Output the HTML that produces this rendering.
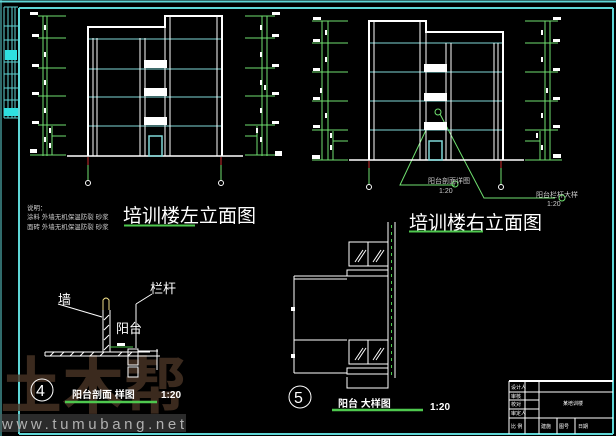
<!DOCTYPE html>
<html><head><meta charset="utf-8"><style>
html,body{margin:0;padding:0;background:#000;}
svg{display:block}
text{font-family:"Liberation Sans","Noto Sans CJK SC",sans-serif;}
</style></head><body>
<svg width="616" height="436" viewBox="0 0 616 436" xmlns="http://www.w3.org/2000/svg">
<rect width="616" height="436" fill="#000"/>
<g stroke="#5fd6d6" fill="none">
<line x1="0" y1="1.5" x2="616" y2="1.5" stroke-width="2"/>
<line x1="19" y1="8" x2="613" y2="8" stroke-width="2"/>
<line x1="19" y1="8" x2="19" y2="434" stroke-width="2"/>
<line x1="613" y1="8" x2="613" y2="434" stroke-width="2"/>
<line x1="19" y1="434" x2="613" y2="434" stroke-width="2"/>
<line x1="1" y1="0" x2="1" y2="436" stroke-width="1"/>
<g stroke-width="1">
<line x1="4" y1="7" x2="4" y2="118"/><line x1="8" y1="7" x2="8" y2="118"/><line x1="12" y1="7" x2="12" y2="118"/><line x1="15" y1="7" x2="15" y2="118"/>
<line x1="4" y1="7" x2="18" y2="7"/><line x1="4" y1="26" x2="18" y2="26"/><line x1="4" y1="40" x2="18" y2="40"/><line x1="4" y1="62" x2="18" y2="62"/><line x1="4" y1="74" x2="18" y2="74"/><line x1="4" y1="88" x2="18" y2="88"/><line x1="4" y1="100" x2="18" y2="100"/><line x1="4" y1="118" x2="18" y2="118"/>
</g>
</g>
<rect x="5" y="50" width="12" height="10" fill="#2ee0e0"/>
<rect x="4" y="108" width="14" height="8" fill="#2ee0e0"/>

<g stroke="#6fe06f" stroke-width="1" fill="none">
<line x1="43" y1="16" x2="43" y2="156"/><line x1="47" y1="16" x2="47" y2="156"/>
<line x1="38" y1="16" x2="66" y2="16"/><line x1="38" y1="38" x2="66" y2="38"/><line x1="38" y1="68" x2="66" y2="68"/><line x1="38" y1="96" x2="66" y2="96"/><line x1="38" y1="125" x2="66" y2="125"/><line x1="30" y1="155" x2="66" y2="155"/>
<line x1="52" y1="126" x2="52" y2="155"/><line x1="52" y1="136" x2="66" y2="136"/>
<line x1="262" y1="16" x2="262" y2="156"/><line x1="267" y1="16" x2="267" y2="156"/>
<line x1="245" y1="16" x2="275" y2="16"/><line x1="245" y1="38" x2="275" y2="38"/><line x1="245" y1="68" x2="275" y2="68"/><line x1="245" y1="96" x2="275" y2="96"/><line x1="245" y1="125" x2="275" y2="125"/><line x1="245" y1="155" x2="282" y2="155"/>
<line x1="257" y1="126" x2="257" y2="155"/><line x1="245" y1="136" x2="257" y2="136"/>
<line x1="88" y1="165" x2="88" y2="181"/><line x1="221" y1="165" x2="221" y2="181"/>
</g>
<g fill="#fff">
<rect x="30" y="12" width="8" height="3"/><rect x="32" y="34" width="7" height="3"/><rect x="32" y="64" width="7" height="3"/><rect x="32" y="92" width="7" height="3"/><rect x="32" y="121" width="7" height="3"/><rect x="30" y="149" width="7" height="4"/>
<rect x="44" y="25" width="2" height="5"/><rect x="44" y="52" width="2" height="5"/><rect x="44" y="80" width="2" height="5"/><rect x="44" y="108" width="2" height="5"/><rect x="44" y="137" width="2" height="5"/><rect x="49" y="128" width="2" height="5"/><rect x="49" y="143" width="2" height="5"/>
<rect x="272" y="12" width="8" height="3"/><rect x="272" y="34" width="7" height="3"/><rect x="272" y="64" width="7" height="3"/><rect x="272" y="92" width="7" height="3"/><rect x="272" y="121" width="7" height="3"/><rect x="275" y="151" width="7" height="5"/>
<rect x="260" y="25" width="2" height="5"/><rect x="260" y="52" width="2" height="5"/><rect x="260" y="80" width="2" height="5"/><rect x="264" y="85" width="2" height="5"/><rect x="260" y="108" width="2" height="5"/><rect x="260" y="137" width="2" height="5"/><rect x="256" y="128" width="2" height="5"/>
</g>
<g stroke="#7fd8d8" stroke-width="1">
<line x1="88" y1="39" x2="222" y2="39"/><line x1="88" y1="69" x2="222" y2="69"/><line x1="88" y1="97" x2="222" y2="97"/><line x1="88" y1="126" x2="222" y2="126"/>
</g>
<g stroke="#fff" fill="none">
<path d="M88 156 V27 H165 V16 H222 V156" stroke-width="2"/>
<line x1="67" y1="156" x2="243" y2="156" stroke-width="1.5"/>
<line x1="93" y1="38" x2="93" y2="156"/><line x1="97" y1="38" x2="97" y2="156"/><line x1="140" y1="38" x2="140" y2="156"/><line x1="145" y1="38" x2="145" y2="156"/><line x1="165" y1="27" x2="165" y2="156"/><line x1="170" y1="16" x2="170" y2="156"/><line x1="217" y1="16" x2="217" y2="156"/>
</g>
<g fill="#fff"><rect x="144" y="60" width="23" height="8"/><rect x="144" y="88" width="23" height="8"/><rect x="144" y="117" width="23" height="8"/></g>
<rect x="149" y="136" width="13" height="20" fill="none" stroke="#7fd8d8" stroke-width="1.5"/>
<g stroke="#d03030"><line x1="88" y1="157" x2="88" y2="165"/><line x1="221" y1="157" x2="221" y2="165"/></g>
<g stroke="#fff" fill="none"><circle cx="88" cy="183" r="2.5"/><circle cx="221" cy="183" r="2.5"/></g>

<g stroke="#6fe06f" stroke-width="1" fill="none">
<line x1="322" y1="21" x2="322" y2="160"/><line x1="328" y1="21" x2="328" y2="160"/>
<line x1="312" y1="21" x2="348" y2="21"/><line x1="312" y1="43" x2="348" y2="43"/><line x1="312" y1="72" x2="348" y2="72"/><line x1="312" y1="101" x2="348" y2="101"/><line x1="312" y1="130" x2="348" y2="130"/><line x1="312" y1="160" x2="348" y2="160"/>
<line x1="333" y1="131" x2="333" y2="160"/><line x1="333" y1="141" x2="348" y2="141"/>
<line x1="545" y1="21" x2="545" y2="160"/><line x1="550" y1="21" x2="550" y2="160"/>
<line x1="525" y1="21" x2="558" y2="21"/><line x1="525" y1="43" x2="558" y2="43"/><line x1="525" y1="72" x2="558" y2="72"/><line x1="525" y1="101" x2="558" y2="101"/><line x1="525" y1="130" x2="558" y2="130"/><line x1="525" y1="160" x2="562" y2="160"/>
<line x1="540" y1="131" x2="540" y2="160"/><line x1="525" y1="141" x2="540" y2="141"/>
<line x1="369" y1="168" x2="369" y2="185"/><line x1="501" y1="168" x2="501" y2="185"/>
<path d="M426 130 L400 185 H455"/><path d="M440 114 L484 198 H555"/>
<circle cx="438" cy="112" r="3"/><circle cx="455" cy="184" r="3"/><circle cx="562" cy="198" r="3"/>
</g>
<g fill="#fff">
<rect x="313" y="17" width="8" height="3"/><rect x="313" y="39" width="7" height="3"/><rect x="313" y="68" width="7" height="3"/><rect x="313" y="97" width="7" height="3"/><rect x="313" y="125" width="7" height="3"/><rect x="312" y="155" width="8" height="4"/>
<rect x="325" y="30" width="2" height="5"/><rect x="325" y="57" width="2" height="5"/><rect x="320" y="88" width="2" height="5"/><rect x="325" y="113" width="2" height="5"/><rect x="330" y="133" width="2" height="5"/><rect x="330" y="145" width="2" height="5"/>
<rect x="553" y="17" width="8" height="3"/><rect x="553" y="39" width="7" height="3"/><rect x="553" y="68" width="7" height="3"/><rect x="553" y="97" width="7" height="3"/><rect x="553" y="125" width="7" height="3"/><rect x="553" y="154" width="8" height="4"/>
<rect x="541" y="30" width="2" height="5"/><rect x="541" y="57" width="2" height="5"/><rect x="546" y="88" width="2" height="5"/><rect x="541" y="113" width="2" height="5"/><rect x="536" y="133" width="2" height="5"/><rect x="541" y="145" width="2" height="5"/>
</g>
<g stroke="#7fd8d8" stroke-width="1">
<line x1="369" y1="43" x2="503" y2="43"/><line x1="369" y1="72" x2="503" y2="72"/><line x1="369" y1="101" x2="503" y2="101"/><line x1="369" y1="130" x2="503" y2="130"/>
</g>
<g stroke="#fff" fill="none">
<path d="M369 160 V21 H426 V32 H503 V160" stroke-width="2"/>
<line x1="349" y1="160" x2="524" y2="160" stroke-width="1.5"/>
<line x1="374" y1="21" x2="374" y2="160"/><line x1="420" y1="21" x2="420" y2="160"/><line x1="426" y1="32" x2="426" y2="160"/><line x1="446" y1="43" x2="446" y2="160"/><line x1="451" y1="43" x2="451" y2="160"/><line x1="494" y1="43" x2="494" y2="160"/><line x1="498" y1="43" x2="498" y2="160"/>
</g>
<g fill="#fff"><rect x="424" y="64" width="23" height="8"/><rect x="424" y="93" width="23" height="8"/><rect x="424" y="122" width="23" height="8"/></g>
<rect x="429" y="141" width="13" height="19" fill="none" stroke="#7fd8d8" stroke-width="1.5"/>
<g stroke="#d03030"><line x1="369" y1="161" x2="369" y2="168"/><line x1="501" y1="161" x2="501" y2="168"/></g>
<g stroke="#fff" fill="none"><circle cx="369" cy="187" r="2.5"/><circle cx="501" cy="187" r="2.5"/></g>
<g fill="#ccc" font-size="7"><text x="428" y="183">阳台剖面详图</text><text x="439" y="193">1:20</text><text x="536" y="197">阳台栏杆大样</text><text x="547" y="206">1:20</text></g>

<g fill="#ccc" font-size="6.5"><text x="27" y="210">说明：</text><text x="27" y="219">涂料 外墙无机保温防裂 砂浆</text><text x="27" y="229">面砖 外墙无机保温防裂 砂浆</text></g>
<text x="123" y="222" fill="#fff" font-size="19">培训楼左立面图</text>
<line x1="124" y1="225.5" x2="195" y2="225.5" stroke="#4ec84e" stroke-width="2"/>
<text x="409" y="229" fill="#fff" font-size="19">培训楼右立面图</text>
<line x1="409" y1="231.5" x2="483" y2="231.5" stroke="#4ec84e" stroke-width="2"/>

<!-- watermark (behind detail 4) -->
<text x="0" y="408" fill="#4a3426" fill-opacity="0.8" font-size="62" font-weight="bold" textLength="186" lengthAdjust="spacingAndGlyphs">土木帮</text>

<g stroke="#fff" fill="none" stroke-width="1">
<path d="M45 352 H150 M45 356 H160 M45 352 V356"/>
<path d="M103 310 V352 M110 310 V352"/>
<path d="M104 320 L109 315 M104 330 L109 325 M104 340 L109 335 M104 350 L109 345"/>
<path d="M50 356 L54 352 M60 356 L64 352 M70 356 L74 352 M80 356 L84 352 M90 356 L94 352 M100 356 L104 352 M118 356 L122 352 M128 356 L132 352"/>
<path d="M136 304 V348"/><path d="M136 304 L152 294"/>
<path d="M58 304 L102 317"/>
<rect x="128" y="349" width="10" height="16"/>
<rect x="128" y="367" width="10" height="10"/>
<path d="M138 351 H158 M157 349 V370"/>
<circle cx="42" cy="390" r="11"/>
</g>
<path d="M103 310 V300 Q106 296 109 300 V310" stroke="#eedd88" fill="none"/>
<line x1="110" y1="347" x2="133" y2="347" stroke="#4ec84e"/>
<rect x="117" y="343" width="8" height="3" fill="#fff"/>
<g fill="#fff" font-size="13"><text x="58" y="304">墙</text><text x="150" y="293">栏杆</text><text x="116" y="333">阳台</text></g>
<text x="36" y="396" fill="#fff" font-size="16">4</text>
<text x="72" y="398" fill="#fff" font-size="10" font-weight="bold">阳台剖面  样图</text>
<text x="161" y="398" fill="#fff" font-size="10" font-weight="bold">1:20</text>
<line x1="65" y1="402" x2="157" y2="402" stroke="#4ec84e" stroke-width="2.5"/>
<rect x="0" y="414" width="186" height="18" fill="#555" fill-opacity="0.5"/>
<text x="2" y="429" fill="#b0b0b0" font-size="15" font-family="Liberation Mono,monospace" textLength="182">www.tumubang.net</text>

<g stroke="#fff" fill="none" stroke-width="1">
<path d="M294 276 H347 M294 279 H347 M294 276 V373 M294 340 H347 M294 373 H347"/>
<rect x="349" y="242" width="39" height="24"/><line x1="368" y1="242" x2="368" y2="266"/>
<rect x="347" y="270" width="41" height="6"/>
<rect x="349" y="340" width="39" height="24"/><line x1="368" y1="340" x2="368" y2="364"/>
<rect x="347" y="368" width="41" height="6"/>
<path d="M347 377 V388 H388 V377"/>
<path d="M388 222 V378 M395 222 V378"/>
<path d="M355 262 L363 250 M358 262 L366 250 M373 262 L381 250 M376 262 L384 250 M355 360 L363 348 M358 360 L366 348 M373 360 L381 348 M376 360 L384 348"/>
<circle cx="300" cy="397" r="11"/>
</g>
<line x1="391.5" y1="225" x2="391.5" y2="377" stroke="#4ec84e" stroke-dasharray="3 4"/>
<rect x="291" y="307" width="4" height="4" fill="#fff"/><rect x="291" y="354" width="4" height="4" fill="#fff"/>
<text x="294" y="403" fill="#fff" font-size="16">5</text>
<text x="338" y="407" fill="#fff" font-size="10" font-weight="bold">阳台  大样图</text>
<text x="430" y="410" fill="#fff" font-size="10" font-weight="bold">1:20</text>
<line x1="332" y1="410" x2="423" y2="410" stroke="#4ec84e" stroke-width="2.5"/>

<g stroke="#fff" fill="none" stroke-width="1">
<line x1="509" y1="381" x2="613" y2="381" stroke-width="2"/>
<line x1="509" y1="381" x2="509" y2="434"/><line x1="525" y1="381" x2="525" y2="434"/><line x1="539" y1="381" x2="539" y2="434"/>
<line x1="509" y1="392" x2="613" y2="392"/><line x1="509" y1="400" x2="539" y2="400"/><line x1="509" y1="409" x2="539" y2="409"/><line x1="509" y1="418" x2="613" y2="418"/>
<line x1="557" y1="418" x2="557" y2="434"/><line x1="575" y1="418" x2="575" y2="434"/>
</g>
<g fill="#fff" font-size="5"><text x="511" y="389">设计人</text><text x="511" y="398">审核</text><text x="511" y="406">校对</text><text x="511" y="415">审定人</text><text x="511" y="428">比 例</text><text x="563" y="405">某培训楼</text><text x="541" y="428">建施</text><text x="559" y="428">图号</text><text x="578" y="428">日期</text></g>
</svg>
</body></html>
